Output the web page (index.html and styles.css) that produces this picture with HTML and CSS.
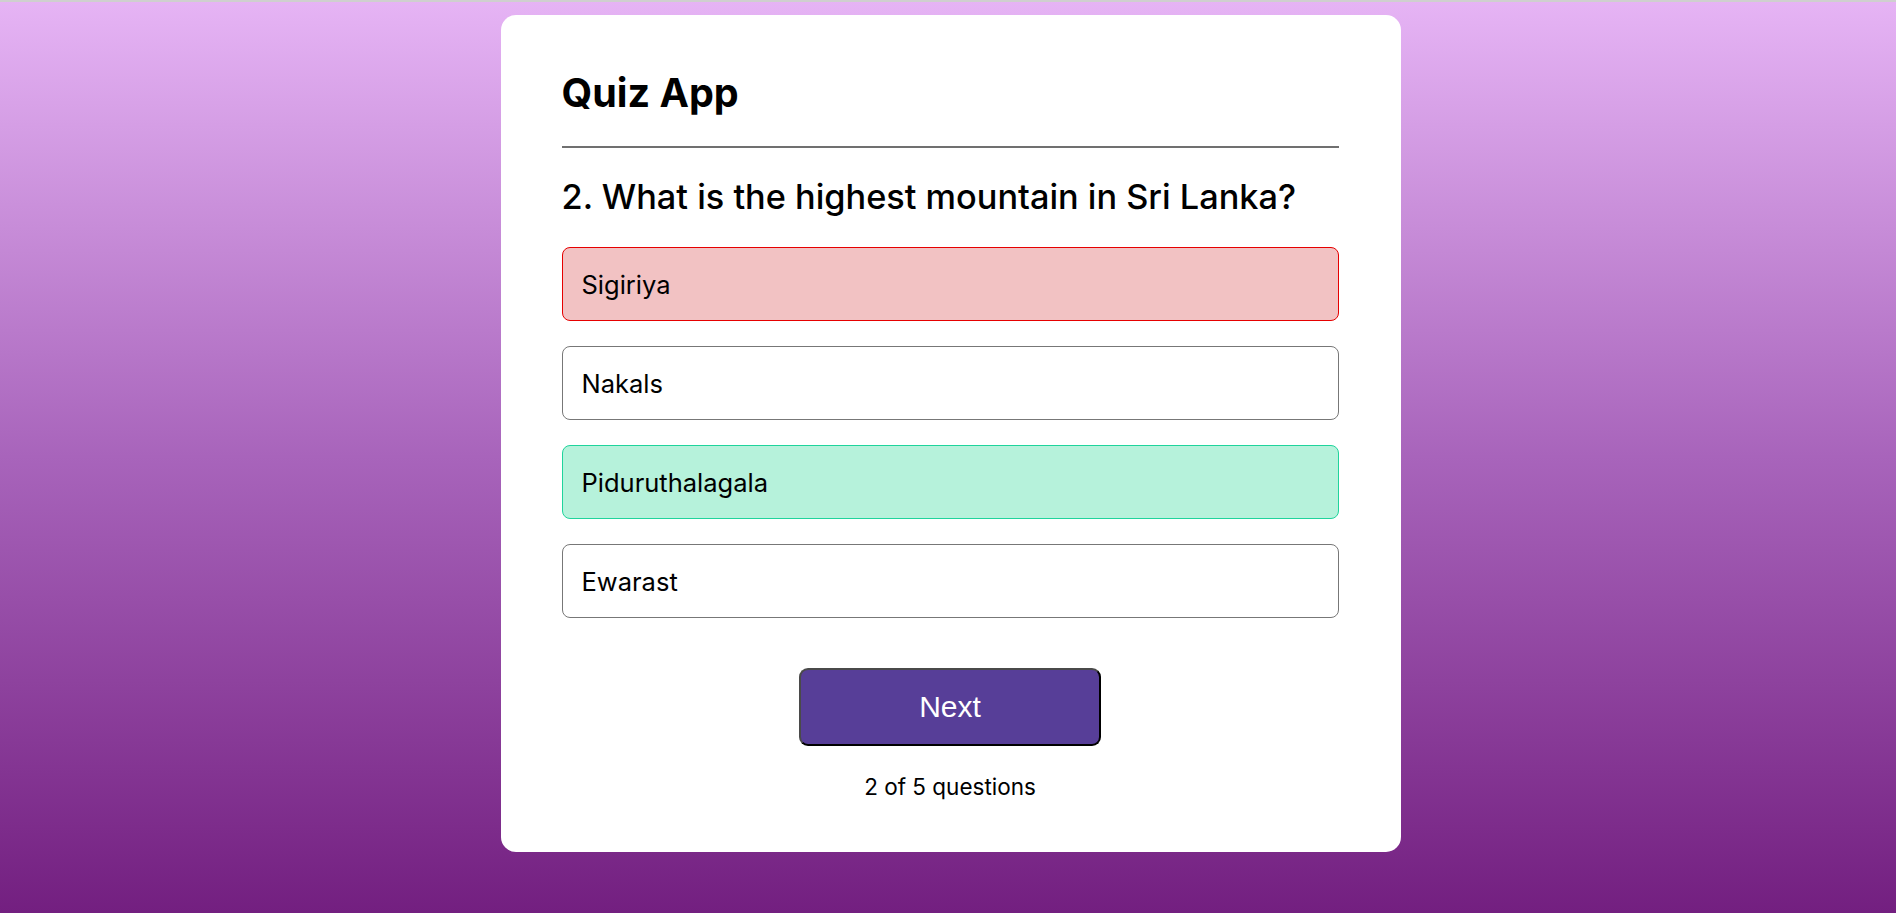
FILE: index.html
```html
<!DOCTYPE html>
<html lang="en">
<head>
<meta charset="utf-8">
<title>Quiz App</title>
<link rel="stylesheet" href="styles.css">
</head>
<body>
  <div class="app">
    <h1 class="title">Quiz App</h1>
    <div class="quiz">
      <h2 class="question">2. What is the highest mountain in Sri Lanka?</h2>
      <div class="answers">
        <button class="answer incorrect">Sigiriya</button>
        <button class="answer">Nakals</button>
        <button class="answer correct">Piduruthalagala</button>
        <button class="answer">Ewarast</button>
      </div>
      <button class="next">Next</button>
      <p class="progress">2 of 5 questions</p>
    </div>
  </div>
</body>
</html>
```

FILE: styles.css
```css
* { box-sizing: border-box; }
html, body { margin: 0; padding: 0; }
body {
  min-height: 913px;
  border-top: 2px solid #cfcfcf;
  padding: 13px 0 0 5px;
  background: linear-gradient(to bottom, #e6b4f5 0%, #a864bb 50%, #731f80 100%);
  font-family: Inter, "Open Sans", sans-serif;
  color: #000;
}
.app {
  width: 900px;
  height: 837px;
  margin: 0 auto;
  background: #fff;
  border-radius: 15px;
  padding: 54px 62px 0 61px;
}
.title {
  margin: 0;
  font-size: 39.5px;
  line-height: 48px;
  font-weight: 700;
  padding-bottom: 29px;
  border-bottom: 2px solid #707070;
}
.question {
  margin: 27px 0 28px;
  font-size: 34.3px;
  line-height: 44px;
  font-weight: 500;
}
.answers {
  display: flex;
  flex-direction: column;
  gap: 25px;
}
.answer {
  display: block;
  width: 100%;
  height: 74px;
  text-align: left;
  padding: 0 19px;
  background: #fff;
  border: 1px solid #777;
  border-radius: 8px;
  font-family: inherit;
  font-size: 25.5px;
  font-weight: 400;
  color: #000;
}
.answer.incorrect { background: #f2c2c3; border-color: #e60000; }
.answer.correct { background: #b6f2db; border-color: #1fd49c; }
.next {
  display: block;
  width: 302px;
  height: 78px;
  margin: 50px auto 0;
  background: #573e98;
  color: #fff;
  font-family: "Liberation Sans", Arial, sans-serif;
  font-size: 30px;
  border: 2px solid;
  border-color: #4a4a4a #000 #000 #4a4a4a;
  border-radius: 9px;
}
.progress {
  margin: 26px 0 0;
  text-align: center;
  font-size: 22.5px;
  line-height: 30px;
}
```
